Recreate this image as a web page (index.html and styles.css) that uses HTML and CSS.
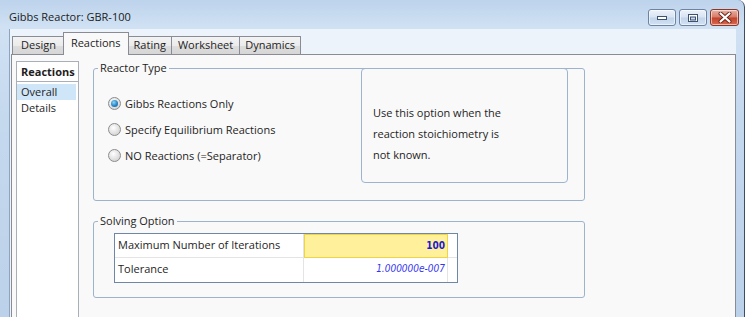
FILE: index.html
```html
<!DOCTYPE html>
<html>
<head>
<meta charset="utf-8">
<title>Gibbs Reactor: GBR-100</title>
<link rel="stylesheet" href="styles.css">
</head>
<body>
<div class="window">
  <div class="titlebar">
    <span class="title">Gibbs Reactor: GBR-100</span>
    <div class="controls">
      <span class="btn">
        <svg width="12" height="6" viewBox="0 0 12 6"><rect x="1.5" y="1.5" width="9" height="3" fill="#fff" stroke="#3d5170" stroke-width="1"/></svg>
      </span>
      <span class="btn">
        <svg width="12" height="10" viewBox="0 0 12 10"><rect x="1.5" y="1.5" width="9" height="7" fill="#fff" stroke="#3d5170" stroke-width="1"/><rect x="3.5" y="4" width="5" height="3" fill="#c9d6e6" stroke="#3d5170" stroke-width="1"/></svg>
      </span>
      <span class="btn close">
        <svg width="16" height="11" viewBox="0 0 16 11"><path d="M3.5 1.5 L12.5 9.5 M12.5 1.5 L3.5 9.5" stroke="#6b2418" stroke-width="4" stroke-linecap="round"/><path d="M3.5 1.5 L12.5 9.5 M12.5 1.5 L3.5 9.5" stroke="#fff" stroke-width="2.2" stroke-linecap="round"/></svg>
      </span>
    </div>
  </div>
  <div class="frame">
    <div class="client">
      <div class="tabs">
        <span class="tab first">Design</span>
        <span class="tab active">Reactions</span>
        <span class="tab narrow">Rating</span>
        <span class="tab">Worksheet</span>
        <span class="tab narrow">Dynamics</span>
      </div>
      <div class="pane">
        <div class="nav">
          <div class="nav-head">Reactions</div>
          <div class="nav-list">
            <div class="nav-item sel">Overall</div>
            <div class="nav-item">Details</div>
          </div>
        </div>
        <div class="main">
          <div class="group g1">
            <span class="legend">Reactor Type</span>
            <div class="radios">
              <div class="radio-row"><span class="radio checked"><span class="dot"></span></span><span>Gibbs Reactions Only</span></div>
              <div class="radio-row"><span class="radio"></span><span>Specify Equilibrium Reactions</span></div>
              <div class="radio-row"><span class="radio"></span><span>NO Reactions (=Separator)</span></div>
            </div>
            <div class="info">Use this option when the<br>reaction stoichiometry is<br>not known.</div>
          </div>
          <div class="group g2">
            <span class="legend">Solving Option</span>
            <div class="grid">
              <div class="cell label r1">Maximum Number of Iterations</div>
              <div class="cell value r1 hl">100</div>
              <div class="cell pad r1"></div>
              <div class="cell label">Tolerance</div>
              <div class="cell value ital">1.000000e-007</div>
              <div class="cell pad"></div>
            </div>
          </div>
        </div>
      </div>
    </div>
  </div>
</div>
</body>
</html>
```
FILE: styles.css
```css
* { box-sizing: border-box; }
html, body { margin: 0; padding: 0; }
body {
  background: #ffffff;
  font-family: "Open Sans", "Noto Sans", sans-serif;
  font-size: 11px;
  color: #1e1e1e;
  width: 750px;
  height: 317px;
  overflow: hidden;
}
.window {
  width: 745px;
  height: 317px;
  display: flex;
  flex-direction: column;
  background: linear-gradient(180deg, #bdd3ec 0%, #d0e1f3 28px, #c4d8ee 120px, #bcd2ea 100%);
  border-right: 1px solid #3e4d63;
  border-top-right-radius: 7px;
  overflow: hidden;
}
.titlebar {
  height: 29px;
  flex: none;
  display: flex;
  justify-content: space-between;
  align-items: flex-start;
  padding: 0 5px 0 9px;
}
.title {
  line-height: 16px;
  padding-top: 9px;
  color: #1b1b1b;
}
.controls {
  display: flex;
  gap: 3px;
  margin-top: 9px;
}
.btn {
  width: 28px;
  height: 17px;
  border: 1px solid #6c83a3;
  border-radius: 3px;
  display: flex;
  align-items: center;
  justify-content: center;
  background: linear-gradient(180deg, #ecf2fa 0%, #d8e4f2 48%, #c2d4ea 52%, #d3e2f3 100%);
  box-shadow: inset 0 0 0 1px rgba(255,255,255,0.55);
}
.btn.close {
  width: 29px;
  background: linear-gradient(180deg, #eab0a4 0%, #d67a66 48%, #c2412b 52%, #d9694e 100%);
  border-color: #8a3628;
}
.frame {
  flex: 1;
  display: flex;
  padding: 0 8px 0 9px;
  min-height: 0;
}
.client {
  flex: 1;
  display: flex;
  flex-direction: column;
  background: #edf3fa;
  border-left: 1px solid #8ea3be;
  padding-left: 1px;
}
.tabs {
  height: 26px;
  flex: none;
  display: flex;
  align-items: flex-end;
  padding-left: 1px;
  margin-bottom: -1px;
  position: relative;
  z-index: 1;
}
.tab {
  height: 19px;
  line-height: 16px;
  padding: 0 6px;
  border: 1px solid #898c95;
  margin-right: -1px;
  background: linear-gradient(180deg, #f3f3f3 0%, #ebebeb 50%, #dddddd 51%, #d6d6d6 100%);
  color: #1e1e1e;
}
.tab.first {
  padding: 0 8px;
}
.tab.narrow {
  padding: 0 5px;
}
.tab.active {
  height: 23px;
  line-height: 20px;
  padding: 0 7px;
  margin: 0 -1px 0 -1px;
  border-bottom: none;
  background: #f9f9f9;
  position: relative;
  z-index: 2;
}
.pane {
  flex: 1;
  display: flex;
  background: #f9f9f9;
  border: 1px solid #898c95;
  border-bottom: none;
  padding: 6px 0 0 4px;
  min-height: 0;
}
.nav {
  width: 63px;
  flex: none;
  border: 1px solid #a9afb8;
  border-bottom: none;
  background: #ffffff;
  display: flex;
  flex-direction: column;
}
.nav-head {
  height: 20px;
  line-height: 19px;
  font-weight: bold;
  padding-left: 4px;
  border-bottom: 1px solid #a9afb8;
}
.nav-list {
  padding: 2px 2px 0 0;
}
.nav-item {
  height: 16px;
  line-height: 16px;
  padding-left: 4px;
}
.nav-item.sel {
  background: #cfe5f8;
}
.main {
  padding: 7px 0 0 14px;
  display: flex;
  flex-direction: column;
}
.group {
  width: 492px;
  border: 1px solid #9db2cd;
  border-radius: 3px;
  position: relative;
}
.legend {
  position: absolute;
  top: -9px;
  left: 4px;
  padding: 0 2px;
  line-height: 16px;
  background: #f9f9f9;
}
.g1 {
  height: 133px;
  display: flex;
}
.radios {
  flex: 1;
  padding: 21px 0 0 14px;
}
.radio-row {
  height: 26px;
  display: flex;
  align-items: center;
  gap: 4px;
}
.radio {
  width: 13px;
  height: 13px;
  border-radius: 50%;
  border: 1px solid #8c8c8c;
  background: radial-gradient(circle at 40% 35%, #ffffff 0%, #e6e6e6 45%, #c8c8c8 100%);
  display: flex;
  align-items: center;
  justify-content: center;
}
.dot {
  width: 7px;
  height: 7px;
  border-radius: 50%;
  background: radial-gradient(circle at 40% 35%, #8fd6f5 0%, #2d8ccc 50%, #0f4f8a 100%);
}
.info {
  width: 207px;
  height: 115px;
  margin: -1px 16px 0 0;
  border: 1px solid #9db4d1;
  border-radius: 4px;
  padding: 33px 0 0 11px;
  line-height: 21px;
}
.g2 {
  margin-top: 20px;
  height: 77px;
  padding: 11px 0 0 20px;
}
.grid {
  width: 344px;
  border: 1px solid #6f87a7;
  background: #ffffff;
  display: grid;
  grid-template-columns: 189px 144px 9px;
  grid-template-rows: 24px 24px;
}
.cell {
  line-height: 22px;
  white-space: nowrap;
}
.cell.r1 {
  border-bottom: 1px solid #e4e4e4;
}
.label {
  padding-left: 3px;
  border-right: 1px solid #e4e4e4;
}
.value {
  text-align: right;
  padding-right: 2px;
  border-right: 1px solid #e4e4e4;
  font-family: "DejaVu Sans Condensed", "DejaVu Sans", sans-serif;
  font-stretch: condensed;
  font-size: 10px;
  color: #2323e0;
}
.value.hl {
  background: #fff09b;
  border: 1px solid #f0d445;
  font-weight: bold;
  color: #1a1ad0;
  line-height: 21px;
}
.value.ital {
  font-style: italic;
  color: #3535f0;
}
```
